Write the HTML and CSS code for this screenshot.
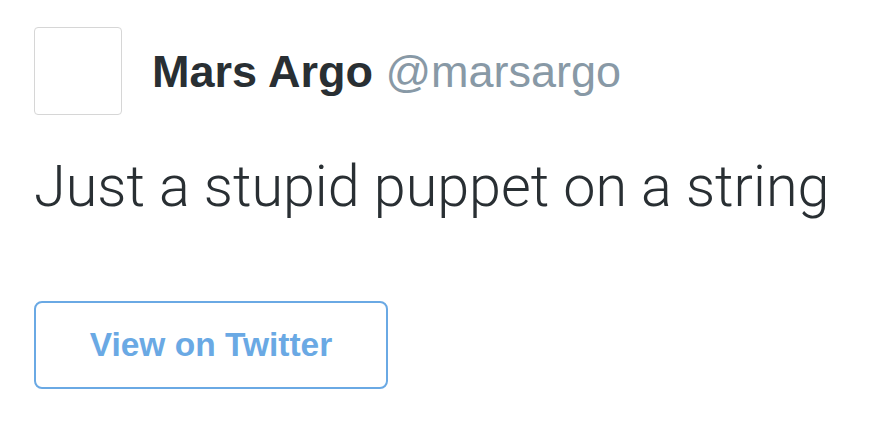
FILE: index.html
```html
<!DOCTYPE html>
<html>
  <head>
    <link rel="stylesheet" href="styles.css">
  </head>
  <body>
    <main class="tweet">
      <header class="tweet-header">
        <div class="avatar"></div>
        <h1 class="author">
          <strong class="name">Mars Argo</strong>
          <span class="handle">@marsargo</span>
        </h1>
      </header>
      <p class="tweet-text">Just a stupid puppet on a string</p>
      <a class="view-button" href="#">View on Twitter</a>
    </main>
  </body>
</html>
```

FILE: styles.css
```css
* {
  margin: 0;
  padding: 0;
  box-sizing: border-box;
}

html, body {
  background: #fff;
  height: 100%;
}

body {
  font-family: "Liberation Sans", Arial, sans-serif;
  color: #292f33;
}

.tweet {
  padding: 27px 34px;
}

.tweet-header {
  display: flex;
  align-items: center;
  gap: 30px;
}

.avatar {
  width: 88px;
  height: 88px;
  border: 1px solid #d6d6d6;
  border-radius: 4px;
  background: #fff;
}

.author {
  font-size: 45px;
  font-weight: 400;
  line-height: 1;
  white-space: nowrap;
}

.name {
  font-weight: 700;
  color: #292f33;
}

.handle {
  color: #8899a6;
}

.tweet-text {
  margin-top: 37px;
  font-family: Roboto, "Liberation Sans", sans-serif;
  font-weight: 300;
  font-size: 57.5px;
  line-height: 1.2;
  color: #292f33;
}

.view-button {
  display: flex;
  align-items: center;
  justify-content: center;
  margin-top: 80px;
  width: 354px;
  height: 88px;
  border: 2px solid #6aa9e4;
  border-radius: 8px;
  color: #6aa9e4;
  font-size: 33.5px;
  font-weight: 700;
  text-decoration: none;
}
```
